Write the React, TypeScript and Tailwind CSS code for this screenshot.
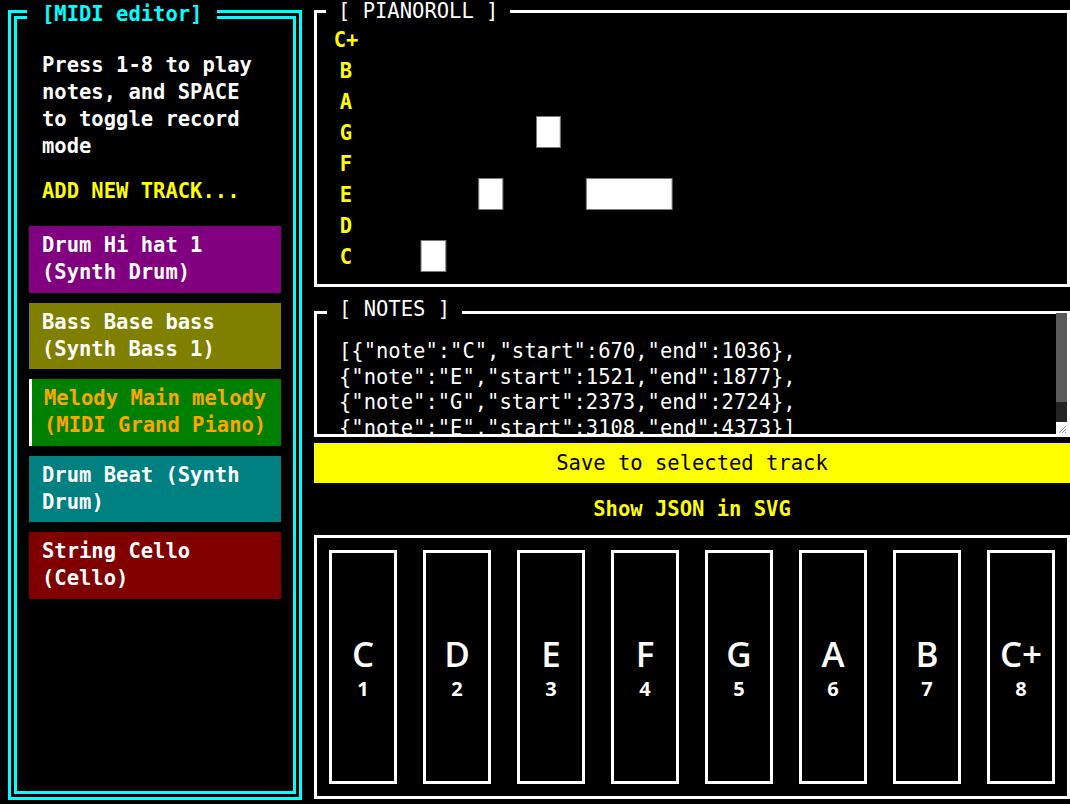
import { useState } from "react";

type Track = { id: number; kind: string; name: string; instrument: string; bg: string };
type Note = { note: string; start: number; end: number };

const TRACKS: Track[] = [
  { id: 1, kind: "Drum", name: "Hi hat 1", instrument: "Synth Drum", bg: "bg-[#800080]" },
  { id: 2, kind: "Bass", name: "Base bass", instrument: "Synth Bass 1", bg: "bg-[#808000]" },
  { id: 3, kind: "Melody", name: "Main melody", instrument: "MIDI Grand Piano", bg: "bg-[#008000]" },
  { id: 4, kind: "Drum", name: "Beat", instrument: "Synth Drum", bg: "bg-[#008080]" },
  { id: 5, kind: "String", name: "Cello", instrument: "Cello", bg: "bg-[#800000]" },
];

const NOTES: Note[] = [
  { note: "C", start: 670, end: 1036 },
  { note: "E", start: 1521, end: 1877 },
  { note: "G", start: 2373, end: 2724 },
  { note: "E", start: 3108, end: 4373 },
];

const ROWS = ["C+", "B", "A", "G", "F", "E", "D", "C"];
const KEYS = ["C", "D", "E", "F", "G", "A", "B", "C+"];

// px per millisecond on the roll
const SCALE = 0.0678;
const ROW_H = 31;

function PianoRoll({ notes }: { notes: Note[] }) {
  return (
    <svg width="100%" height="250" className="block">
      {ROWS.map((label, i) => (
        <text
          key={label}
          x={29}
          y={17 + i * ROW_H}
          textAnchor="middle"
          dominantBaseline="central"
          fill="#ffff00"
          fontWeight="bold"
          fontSize="20.5"
          fontFamily="'DejaVu Sans Mono', monospace"
        >
          {label}
        </text>
      ))}
      {notes.map((n, i) => {
        const row = ROWS.indexOf(n.note);
        return (
          <rect
            key={i}
            x={58.6 + n.start * SCALE}
            y={0.5 + row * ROW_H}
            width={(n.end - n.start) * SCALE}
            height={ROW_H}
            fill="#ffffff"
            stroke="#7a7a7a"
            strokeWidth="1"
          />
        );
      })}
    </svg>
  );
}

export default function App() {
  const [selected, setSelected] = useState(3);
  const json = NOTES.map(n => JSON.stringify(n)).join(",\n");

  return (
    <div className="flex h-[804px] w-full overflow-hidden bg-black pl-[8px] font-['DejaVu_Sans_Mono',monospace] text-[20.5px] text-white">
      {/* Sidebar */}
      <fieldset className="h-[800px] w-[294px] shrink-0 border-[9px] border-double border-[#00ffff] px-[12px] pt-[23px]">
        <legend className="-ml-[2px] px-[15px] font-bold leading-[29px] text-[#00ffff]">[MIDI editor]</legend>
        <p className="px-[13px] font-bold leading-[27px]">
          Press 1-8 to play notes, and SPACE to toggle record mode
        </p>
        <button className="mt-[18px] block px-[13px] text-left font-bold leading-[27px] text-[#ffff00]">
          ADD NEW TRACK...
        </button>
        <div className="mt-[21px] flex flex-col gap-[10px]">
          {TRACKS.map(t => {
            const active = t.id === selected;
            return (
              <button
                key={t.id}
                onClick={() => setSelected(t.id)}
                className={
                  active
                    ? `${t.bg} border-l-[3px] border-white py-[6.25px] pl-[12px] pr-[8px] text-left font-bold leading-[27px] text-[#ffa500]`
                    : `${t.bg} py-[6.25px] pl-[13px] pr-[8px] text-left font-bold leading-[27px] text-white`
                }
              >
                {t.kind} {t.name} ({t.instrument})
              </button>
            );
          })}
        </div>
      </fieldset>

      {/* Main column */}
      <div className="ml-[12px] flex flex-1 flex-col">
        <fieldset className="h-[287px] border-[3px] border-white">
          <legend className="ml-[9px] px-[12px] leading-[23px]">[ PIANOROLL ]</legend>
          <PianoRoll notes={NOTES} />
        </fieldset>

        <div className="relative mt-[24px]">
          <textarea
            readOnly
            value={`[${json}]`}
            className="block h-[126px] w-full resize-none overflow-hidden border-[3px] border-white bg-black pb-[22px] pl-[22px] pr-[26px] pt-[25px] leading-[25.6px] text-white outline-none"
          />
          <span className="absolute left-[13px] top-[-14px] bg-black px-[12px] leading-[24px]">[ NOTES ]</span>
          {/* scrollbar + resize grip */}
          <div className="absolute bottom-[3px] right-[3px] top-[2px] flex w-[11px] flex-col bg-[#232323]">
            <div className="h-[89px] bg-[#5a5a5a]" />
            <div className="flex-1" />
            <div className="h-[12px] bg-white">
              <svg width="11" height="12" viewBox="0 0 11 12" className="block">
                <path d="M3 11 L10 4 M6 11 L10 7 M9 11 L10 10" stroke="#888" strokeWidth="1" />
              </svg>
            </div>
          </div>
        </div>

        <button className="mt-[6px] h-[40px] w-full bg-[#ffff00] text-black">Save to selected track</button>
        <button className="mt-[11px] h-[26px] w-full font-bold text-[#ffff00]">Show JSON in SVG</button>

        <div className="mt-[15px] flex h-[264px] gap-[26px] border-[3px] border-white p-[12px]">
          {KEYS.map((k, i) => (
            <button
              key={k}
              className="flex flex-1 flex-col items-center justify-center border-[3px] border-white bg-black font-['Open_Sans',sans-serif] text-white"
            >
              <span className="text-[35px] font-semibold leading-[40px]">{k}</span>
              <span className="mt-[3px] text-[20px] font-bold leading-[24px]">{i + 1}</span>
            </button>
          ))}
        </div>
      </div>
    </div>
  );
}
